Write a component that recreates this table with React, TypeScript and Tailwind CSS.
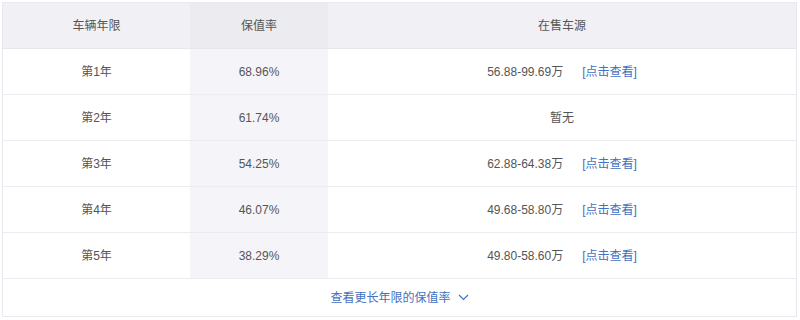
import React from "react";

const rows = [
  { year: "第1年", rate: "68.96%", price: "56.88-99.69万" },
  { year: "第2年", rate: "61.74%", price: null },
  { year: "第3年", rate: "54.25%", price: "62.88-64.38万" },
  { year: "第4年", rate: "46.07%", price: "49.68-58.80万" },
  { year: "第5年", rate: "38.29%", price: "49.80-58.60万" },
];

export default function App() {
  return (
    <div className="w-[800px] h-[320px] bg-white pl-[2px] pt-[2px] font-['Liberation_Sans','Noto_Sans_CJK_SC',sans-serif] text-[12px] text-[#555]">
      <div className="w-[795px] border border-[#e8e8ee]">
        <div className="grid grid-cols-[187px_138px_1fr] h-[46px] bg-[#f0f0f5] border-b border-[#e6e6ec]">
          <div className="flex items-center justify-center">车辆年限</div>
          <div className="flex items-center justify-center bg-[#ebebf0]">保值率</div>
          <div className="flex items-center justify-center">在售车源</div>
        </div>
        {rows.map((r) => (
          <div key={r.year} className="grid grid-cols-[187px_138px_1fr] h-[46px] border-b border-[#ececf0]">
            <div className="flex items-center justify-center">{r.year}</div>
            <div className="flex items-center justify-center bg-[#f5f5f9]">{r.rate}</div>
            <div className="flex items-center justify-center">
              {r.price ? (
                <>
                  <span>{r.price}</span>
                  <a className="ml-[19px] text-[#4470c0] cursor-pointer">[点击查看]</a>
                </>
              ) : (
                <span>暂无</span>
              )}
            </div>
          </div>
        ))}
        <div className="h-[37px] flex items-center justify-center text-[#4470c0]">
          <span>查看更长年限的保值率</span>
          <svg className="ml-[7px]" width="11" height="7" viewBox="0 0 11 7" fill="none">
            <path d="M1 1l4.5 4.5L10 1" stroke="#4470c0" strokeWidth="1.2" />
          </svg>
        </div>
      </div>
    </div>
  );
}
